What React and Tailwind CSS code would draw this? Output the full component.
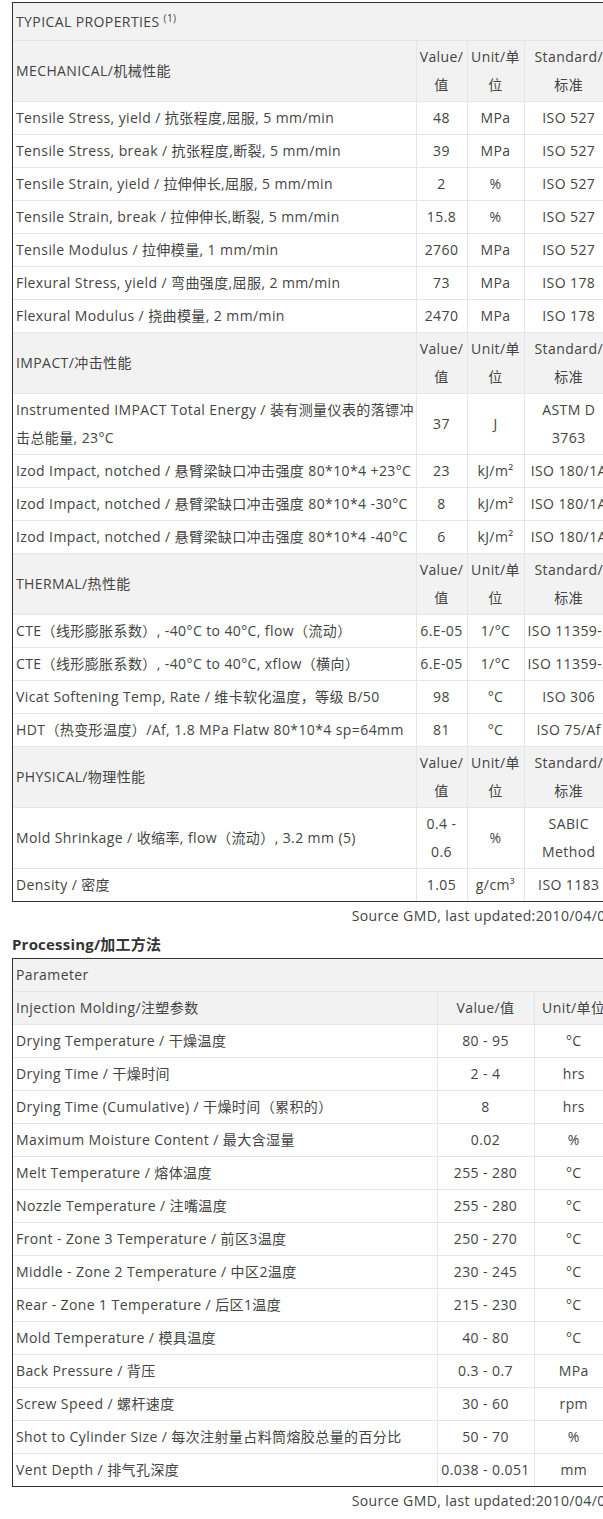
import React from 'react';

const font = { fontFamily: '"Open Sans", "Noto Sans CJK SC", sans-serif' };

const sections = [
  {
    title: 'MECHANICAL/机械性能',
    rows: [
      ['Tensile Stress, yield / 抗张程度,屈服, 5 mm/min', '48', 'MPa', 'ISO 527'],
      ['Tensile Stress, break / 抗张程度,断裂, 5 mm/min', '39', 'MPa', 'ISO 527'],
      ['Tensile Strain, yield / 拉伸伸长,屈服, 5 mm/min', '2', '%', 'ISO 527'],
      ['Tensile Strain, break / 拉伸伸长,断裂, 5 mm/min', '15.8', '%', 'ISO 527'],
      ['Tensile Modulus / 拉伸模量, 1 mm/min', '2760', 'MPa', 'ISO 527'],
      ['Flexural Stress, yield / 弯曲强度,屈服, 2 mm/min', '73', 'MPa', 'ISO 178'],
      ['Flexural Modulus / 挠曲模量, 2 mm/min', '2470', 'MPa', 'ISO 178'],
    ],
  },
  {
    title: 'IMPACT/冲击性能',
    rows: [
      ['Instrumented IMPACT Total Energy / 装有测量仪表的落镖冲\n击总能量, 23°C', '37', 'J', 'ASTM D\n3763'],
      ['Izod Impact, notched / 悬臂梁缺口冲击强度 80*10*4 +23°C', '23', 'kJ/m²', 'ISO 180/1A'],
      ['Izod Impact, notched / 悬臂梁缺口冲击强度 80*10*4 -30°C', '8', 'kJ/m²', 'ISO 180/1A'],
      ['Izod Impact, notched / 悬臂梁缺口冲击强度 80*10*4 -40°C', '6', 'kJ/m²', 'ISO 180/1A'],
    ],
  },
  {
    title: 'THERMAL/热性能',
    rows: [
      ['CTE（线形膨胀系数）, -40°C to 40°C, flow（流动）', '6.E-05', '1/°C', 'ISO 11359-2'],
      ['CTE（线形膨胀系数）, -40°C to 40°C, xflow（横向）', '6.E-05', '1/°C', 'ISO 11359-2'],
      ['Vicat Softening Temp, Rate / 维卡软化温度，等级 B/50', '98', '°C', 'ISO 306'],
      ['HDT（热变形温度）/Af, 1.8 MPa Flatw 80*10*4 sp=64mm', '81', '°C', 'ISO 75/Af'],
    ],
  },
  {
    title: 'PHYSICAL/物理性能',
    rows: [
      ['Mold Shrinkage / 收缩率, flow（流动）, 3.2 mm (5)', '0.4 -\n0.6', '%', 'SABIC\nMethod'],
      ['Density / 密度', '1.05', 'g/cm³', 'ISO 1183'],
    ],
  },
];

const processing = [
  ['Drying Temperature / 干燥温度', '80 - 95', '°C'],
  ['Drying Time / 干燥时间', '2 - 4', 'hrs'],
  ['Drying Time (Cumulative) / 干燥时间（累积的）', '8', 'hrs'],
  ['Maximum Moisture Content / 最大含湿量', '0.02', '%'],
  ['Melt Temperature / 熔体温度', '255 - 280', '°C'],
  ['Nozzle Temperature / 注嘴温度', '255 - 280', '°C'],
  ['Front - Zone 3 Temperature / 前区3温度', '250 - 270', '°C'],
  ['Middle - Zone 2 Temperature / 中区2温度', '230 - 245', '°C'],
  ['Rear - Zone 1 Temperature / 后区1温度', '215 - 230', '°C'],
  ['Mold Temperature / 模具温度', '40 - 80', '°C'],
  ['Back Pressure / 背压', '0.3 - 0.7', 'MPa'],
  ['Screw Speed / 螺杆速度', '30 - 60', 'rpm'],
  ['Shot to Cylinder Size / 每次注射量占料筒熔胶总量的百分比', '50 - 70', '%'],
  ['Vent Depth / 排气孔深度', '0.038 - 0.051', 'mm'],
];

const cell = 'px-[3px] py-[2px] leading-[28px] whitespace-pre border-l border-[#e6e6e6] first:border-l-0 align-middle';
const row = 'border-b border-[#e6e6e6] last:border-b-0';

export default function App() {
  return (
    <div className="w-[603px] overflow-hidden bg-white text-[14px] tracking-[0.4px] text-[#444]" style={font}>
      <div className="ml-[12px] mt-[2px] w-[602px]">
        <div className="border border-[#333]">
          <table className="w-full table-fixed border-collapse">
            <colgroup>
              <col className="w-[403px]" />
              <col className="w-[51px]" />
              <col className="w-[57px]" />
              <col />
            </colgroup>
            <tbody>
              <tr className={row + ' bg-[#f2f2f2]'}>
                <td colSpan={4} className="px-[3px] pt-[5px] pb-[4px] leading-[28px] text-left">
                  TYPICAL PROPERTIES <sup className="text-[10px]">(1)</sup>
                </td>
              </tr>
              {sections.map(s => (
                <React.Fragment key={s.title}>
                  <tr className={row + ' bg-[#f2f2f2]'}>
                    <td className={cell + ' text-left'}>{s.title}</td>
                    <td className={cell + ' text-center'}>{'Value/\n值'}</td>
                    <td className={cell + ' text-center'}>{'Unit/单\n位'}</td>
                    <td className={cell + ' text-center'}>{'Standard/\n标准'}</td>
                  </tr>
                  {s.rows.map(r => (
                    <tr key={r[0]} className={row}>
                      <td className={cell + ' text-left'}>{r[0]}</td>
                      <td className={cell + ' text-center'}>{r[1]}</td>
                      <td className={cell + ' text-center'}>{r[2]}</td>
                      <td className={cell + ' text-center'}>{r[3]}</td>
                    </tr>
                  ))}
                </React.Fragment>
              ))}
            </tbody>
          </table>
        </div>
        <p className="text-right leading-[28px]">Source GMD, last updated:2010/04/06</p>

        <h3 className="font-bold text-[15px] text-[#333] tracking-[0.2px] leading-[28px]">Processing/加工方法</h3>
        <div className="border border-[#333]">
          <table className="w-full table-fixed border-collapse">
            <colgroup>
              <col className="w-[424px]" />
              <col className="w-[97px]" />
              <col />
            </colgroup>
            <tbody>
              <tr className={row + ' bg-[#f2f2f2]'}>
                <td colSpan={3} className="px-[3px] py-[2px] leading-[28px] text-left">Parameter</td>
              </tr>
              <tr className={row + ' bg-[#f2f2f2]'}>
                <td className={cell + ' text-left'}>Injection Molding/注塑参数</td>
                <td className={cell + ' text-center'}>Value/值</td>
                <td className={cell + ' text-center'}>Unit/单位</td>
              </tr>
              {processing.map(r => (
                <tr key={r[0]} className={row}>
                  <td className={cell + ' text-left'}>{r[0]}</td>
                  <td className={cell + ' text-center'}>{r[1]}</td>
                  <td className={cell + ' text-center'}>{r[2]}</td>
                </tr>
              ))}
            </tbody>
          </table>
        </div>
        <p className="text-right leading-[28px]">Source GMD, last updated:2010/04/06</p>
      </div>
    </div>
  );
}
